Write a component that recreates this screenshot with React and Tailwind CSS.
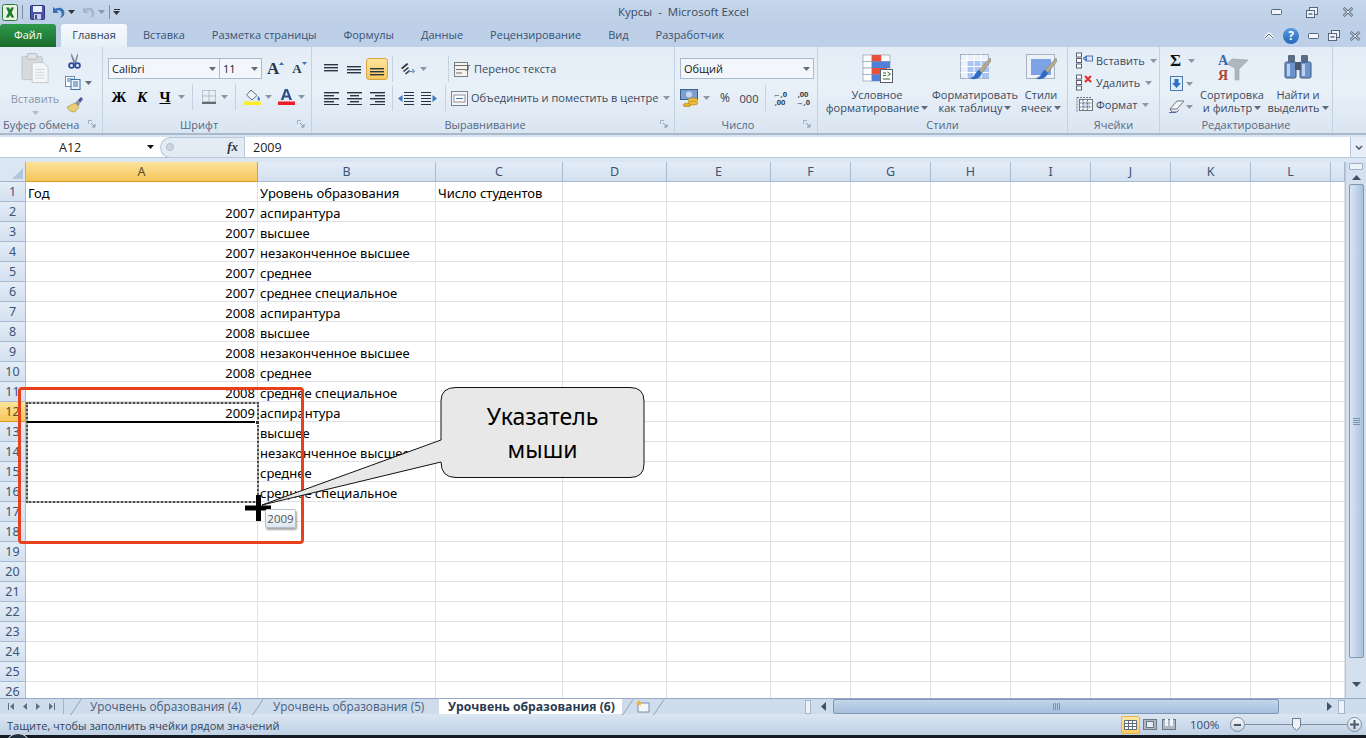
const Caret = ({ c = "#5f6b7a" }) => (
  <svg width="7" height="4" viewBox="0 0 7 4" className="shrink-0"><path d="M0 0h7L3.5 4z" fill={c} /></svg>
);

const Launcher = () => (
  <svg width="9" height="9" viewBox="0 0 9 9" className="shrink-0">
    <path d="M.5 4V.5H4M.5.5" fill="none" stroke="#9fb0c2" />
    <path d="M3 3l4 4M7 4v3H4" fill="none" stroke="#8094aa" />
  </svg>
);

const Sep = () => <div className="w-px h-[26px] bg-[#c5d2e2] shrink-0" />;

const Lines = ({ rows, w = 16 }) => (
  <svg width={w} height="14" viewBox={`0 0 ${w} 14`} className="shrink-0">
    {rows.map((r, i) => (
      <rect key={i} x={r[0]} y={r[1]} width={r[2]} height="1.4" fill="#2b3442" />
    ))}
  </svg>
);

const ExcelLogo = () => (
  <svg width="16" height="17" viewBox="0 0 16 17">
    <rect x=".5" y=".5" width="15" height="16" rx="2" fill="#e8f2e0" stroke="#2f7a37" />
    <path d="M4 3.5h3l1 2.2 1.2-2.2H12L9.6 8.5l2.6 5H9.3L8 10.9l-1.3 2.6H3.8l2.6-5z" fill="#1f7a2e" />
  </svg>
);

const Save = () => (
  <svg width="15" height="15" viewBox="0 0 15 15">
    <rect x=".5" y=".5" width="14" height="14" rx="1" fill="#4a55a8" stroke="#2c3478" />
    <rect x="3" y="1" width="9" height="6" fill="#e9eefb" />
    <rect x="4" y="9" width="7" height="5.5" fill="#c9cfe8" />
    <rect x="5" y="10" width="2" height="4" fill="#3d4690" />
  </svg>
);

const Undo = ({ c = "#3a6fb5" }) => (
  <svg width="14" height="13" viewBox="0 0 14 13">
    <path d="M2 1v6h6L5.7 4.9C8 3.5 10.5 5 10.6 8c0 1.8-.8 3-2 4 3-.5 5-2.600 4.800-5.500C13 2.500 8.500.5 4.500 2.700z" fill={c} />
  </svg>
);

const Scissors = () => (
  <svg width="13" height="16" viewBox="0 0 13 16">
    <path d="M3.500 0l3.500 8 2.500-8 .5 3-2 7-1.500 1-1-1L3 3z" fill="#7d8a99" />
    <circle cx="3.500" cy="12.500" r="2.400" fill="none" stroke="#2b4a9b" strokeWidth="1.800" />
    <circle cx="9.500" cy="12.500" r="2.400" fill="none" stroke="#2b4a9b" strokeWidth="1.800" />
  </svg>
);

const Copy = () => (
  <svg width="16" height="14" viewBox="0 0 16 14">
    <rect x=".5" y=".5" width="9" height="10" fill="#fff" stroke="#6f8db5" />
    <rect x="6" y="3.500" width="9" height="10" fill="#eef4fb" stroke="#3f6ea8" />
    <path d="M2 3h6M2 5h3M8 6h5M8 8h5M8 10h5" stroke="#3f6ea8" />
  </svg>
);

const Brush = () => (
  <svg width="17" height="16" viewBox="0 0 17 16">
    <path d="M9 6L1 10c1 3 4 5 7 5 2 0 4-4 5-6z" fill="#e8cf72" stroke="#a58a35" strokeWidth=".6" />
    <path d="M9 6l3-3 2 4-2 2z" fill="#8b92a2" />
    <path d="M12 3l3-3 2 2-3 4z" fill="#5a4aa0" />
  </svg>
);

const Paste = () => (
  <svg width="28" height="31" viewBox="0 0 28 31">
    <rect x=".5" y="3.500" width="21" height="24" rx="1.500" fill="#d5d8dc" stroke="#c2c6cb" />
    <rect x="6" y="0.500" width="10" height="6" rx="1.500" fill="#dfe2e6" stroke="#b6bbc1" />
    <path d="M11 10h12l4.500 4.500V30.500H11z" fill="#f4f5f6" stroke="#c6cacf" />
    <path d="M14 17h10M14 20h10M14 23h10M14 26h10" stroke="#d2d5d9" />
  </svg>
);

const BorderIcon = () => (
  <svg width="14" height="14" viewBox="0 0 14 14">
    <path d="M.5.500h13v11H.5zM.5 6h13M7 .500v11" fill="none" stroke="#8b96a5" strokeDasharray="1 1" />
    <path d="M0 13h14" stroke="#333" strokeWidth="1.400" />
  </svg>
);

const FillIcon = () => (
  <svg width="18" height="16" viewBox="0 0 18 16">
    <path d="M7 1l6 5.500-5 4.500-5.500-5z" fill="#eef3f9" stroke="#5d6e85" />
    <path d="M14 7c1.300 1.500 2 2.500 2 3.200a1.200 1.200 0 0 1-2.400 0c0-.7.200-1.700.4-3.200z" fill="#3a6fb5" />
    <rect y="12.500" width="17" height="3.500" fill="#ffee2a" />
  </svg>
);

const ColorA = () => (
  <svg width="17" height="16" viewBox="0 0 17 16">
    <path d="M6.800 0h3l4.200 11h-2.600l-.9-2.600H6.200L5.300 11H2.800zM7 6.500h2.900L8.400 2.300z" fill="#314f87" />
    <rect y="12.500" width="17" height="3.500" fill="#ee1c25" />
  </svg>
);

const Orient = () => (
  <svg width="18" height="15" viewBox="0 0 18 15">
    <path d="M2 6l6-5 1.300 1.300-6 5zM4 9l5-4 1 1-5 4zM6 11.500l4-3.500 1 1-4 3.500z" fill="#333" />
    <path d="M9 10l6-1M13 7l2.500 2-1.800 2.400" fill="none" stroke="#5f7ea8" />
  </svg>
);

const Indent = ({ flip }) => (
  <svg width="16" height="15" viewBox="0 0 16 15" style={flip ? { transform: "scaleX(-1)" } : undefined}>
    <path d="M6 1.500h10M6 4.500h10M6 7.500h10M6 10.500h10M6 13.500h10" stroke="#2b3442" strokeWidth="1.200" />
    <path d="M0 7.500L4.500 4v7z" fill="#3a7bc8" />
  </svg>
);

const Wrap = () => (
  <svg width="17" height="15" viewBox="0 0 17 15">
    <rect x=".5" y=".5" width="13" height="14" fill="#f7f4ee" stroke="#7b7f86" />
    <path d="M0 3.500h16M2 7.500h9M2 11h6" stroke="#6b6f76" />
    <path d="M14 4v4h-3" fill="none" stroke="#444" />
  </svg>
);

const Merge = () => (
  <svg width="17" height="15" viewBox="0 0 17 15">
    <rect x=".5" y=".5" width="16" height="14" fill="#f2f4f7" stroke="#7b828c" />
    <rect x="3" y="4" width="11" height="7" fill="#fff" stroke="#8b929c" />
    <path d="M5 7.500h7" stroke="#3a6fb5" />
  </svg>
);

const Money = () => (
  <svg width="20" height="18" viewBox="0 0 20 18">
    <rect x=".5" y=".5" width="17" height="10" fill="#7d9fd0" stroke="#3b5d92" />
    <ellipse cx="9" cy="5.500" rx="3" ry="3" fill="#c6d8f0" />
    <ellipse cx="13" cy="11" rx="5" ry="2" fill="#f0c03c" stroke="#a97e16" strokeWidth=".6" />
    <ellipse cx="13" cy="14" rx="5" ry="2" fill="#f0c03c" stroke="#a97e16" strokeWidth=".6" />
    <ellipse cx="7" cy="16" rx="4" ry="1.800" fill="#e6b22e" stroke="#a97e16" strokeWidth=".6" />
  </svg>
);

const CondFormat = () => (
  <svg width="31" height="29" viewBox="0 0 31 29">
    <g fill="#fff" stroke="#9aa9bb" strokeWidth=".8">
      {[0, 1, 2, 3].map((r) =>
        [0, 1, 2].map((c) => <rect key={`${r}${c}`} x={1 + c * 9} y={1 + r * 6.500} width="9" height="6.500" />)
      )}
    </g>
    <rect x="10" y="1" width="9" height="6.500" fill="#e8503a" />
    <rect x="10" y="7.500" width="18" height="6.500" fill="#4f81d8" />
    <rect x="10" y="14" width="15" height="6.500" fill="#e8503a" />
    <rect x="10" y="20.500" width="9" height="6.500" fill="#4f81d8" />
    <rect x="18.500" y="15.500" width="12" height="13" fill="#fff" stroke="#57606c" />
    <path d="M21 19h3M21 21.500h3M21 25h7M25.500 18l3 2-3 2" fill="none" stroke="#2f6d33" />
  </svg>
);

const BrushOver = ({ variant }) => (
  <svg width="31" height="29" viewBox="0 0 31 29">
    {variant === "table" ? (
      <g>
        <rect x=".5" y=".5" width="28" height="24" fill="#eaf1fb" stroke="#a4b2c4" />
        <rect x="7" y="7" width="22" height="17" fill="#a9c4f1" />
        <path d="M.5 6.500h28M.5 12.500h28M.5 18.500h28M7 .500v24M14 .500v24M21 .500v24" stroke="#fff" />
      </g>
    ) : (
      <g>
        <rect x=".5" y=".5" width="28" height="24" fill="#eef2f7" stroke="#a4b2c4" />
        <rect x="5" y="5" width="20" height="16" fill="#7ea2e6" />
      </g>
    )}
    <path d="M30 4L19 16l3 3L31 7z" fill="#b5a98e" stroke="#7d7667" strokeWidth=".5" />
    <path d="M19 16c-3 1-3 4-5 6-1.500 1.500-3 2-5 2 4 2 10 2 13-5z" fill="#2c6cc4" />
  </svg>
);

const InsCell = ({ mark }) => (
  <svg width="17" height="17" viewBox="0 0 17 17">
    <rect x=".5" y="1" width="5" height="4" fill="#fff" stroke="#58616d" />
    <rect x=".5" y="6.500" width="5" height="4" fill="#fff" stroke="#58616d" />
    <rect x=".5" y="12" width="5" height="4" fill="#fff" stroke="#58616d" />
    {mark === "ins" ? (
      <g>
        <path d="M7 6h3V4l-3 2.500L10 9V7" fill="#3a6fb5" stroke="#3a6fb5" strokeWidth=".5" />
        <rect x="10.500" y="4" width="6" height="5" fill="#dbe7f6" stroke="#4c78b0" />
      </g>
    ) : (
      <path d="M9 2l6 6M15 2L9 8" stroke="#e0342c" strokeWidth="2.200" />
    )}
  </svg>
);

const FormatCell = () => (
  <svg width="17" height="17" viewBox="0 0 17 17">
    <rect x="3.500" y="3.500" width="13" height="11" fill="#fbfbf6" stroke="#6d7682" />
    <rect x="6" y="5.500" width="8" height="7" fill="#ccdcf3" />
    <path d="M1 1.500h14M1 1.500v15M7 3.500v11M11.500 3.500v11M3.500 7h13M3.500 11h13" stroke="#6d7682" strokeDasharray="2 1" fill="none" />
  </svg>
);

const FillDown = () => (
  <svg width="13" height="15" viewBox="0 0 13 15">
    <rect x=".5" y=".5" width="12" height="14" fill="#e1ecf9" stroke="#4c78b0" />
    <path d="M4.500 3h4v4H11l-4.500 5L2 7h2.500z" fill="#2f6ec2" />
  </svg>
);

const Eraser = () => (
  <svg width="16" height="13" viewBox="0 0 16 13">
    <path d="M1 9l7-8h7l-7 8z" fill="#f6f7f9" stroke="#6f7782" />
    <path d="M1 9l2 3h5l2-2" fill="none" stroke="#6f7782" />
    <path d="M0 12.500h7" stroke="#4c6f9e" />
  </svg>
);

const SortFilter = () => (
  <svg width="31" height="29" viewBox="0 0 31 29">
    <path d="M10 11l5-5 16 1-9 9v11h-4V15z" fill="#b1b7be" stroke="#8e959d" strokeWidth=".5" />
    <text x="1" y="12" fontSize="14" fontWeight="700" fontFamily="Liberation Serif" fill="#3869ad">A</text>
    <text x="1" y="27" fontSize="14" fontWeight="700" fontFamily="Liberation Serif" fill="#b0412f">Я</text>
  </svg>
);

const Binoculars = () => (
  <svg width="28" height="26" viewBox="0 0 28 26">
    <rect x="4" y="2" width="7" height="7" rx="1" fill="#5a6c86" />
    <rect x="17" y="2" width="7" height="7" rx="1" fill="#5a6c86" />
    <rect x="1" y="9" width="11" height="16" rx="1.500" fill="#6c93cc" stroke="#3e5778" />
    <rect x="16" y="9" width="11" height="16" rx="1.500" fill="#6c93cc" stroke="#3e5778" />
    <rect x="11" y="9" width="6" height="8" fill="#46586f" />
    <rect x="3" y="11" width="3" height="12" fill="#bcd0ec" />
    <rect x="18" y="11" width="3" height="12" fill="#bcd0ec" />
  </svg>
);

const WinMin = ({ w = 11 }) => (
  <svg width={w} height="6" viewBox={`0 0 ${w} 6`}><rect x=".5" y=".5" width={w - 1} height="5" rx="1" fill="#f2f6fb" stroke="#55667c" /></svg>
);
const WinRestore = () => (
  <svg width="12" height="11" viewBox="0 0 12 11">
    <rect x="3.500" y=".5" width="8" height="7" fill="#eef3f9" stroke="#55667c" />
    <rect x=".5" y="3.500" width="8" height="7" fill="#eef3f9" stroke="#55667c" />
    <rect x="2.500" y="6" width="4" height="2" fill="#7f8ea0" />
  </svg>
);
const WinClose = () => (
  <svg width="12" height="10" viewBox="0 0 12 10">
    <path d="M1.500 1l9 8M10.500 1l-9 8" stroke="#55667c" strokeWidth="2.600" />
    <path d="M1.500 1l9 8M10.500 1l-9 8" stroke="#eef3f9" strokeWidth="1" />
  </svg>
);

const Group = ({ label, className, children, launcher, labelClass = "justify-center" }) => (
  <div className={`h-full flex flex-col border-r border-[#c4d1e1] shrink-0 ${className}`}>
    <div className="flex-1 min-h-0 flex">{children}</div>
    <div className={`h-[18px] flex items-center text-[11px] text-[#56677f] relative ${labelClass}`}>
      <span>{label}</span>
      {launcher && <span className="absolute right-[5px] top-[5px] flex"><Launcher /></span>}
    </div>
  </div>
);

const colHeaders = [
  ["A", "w-[232px]"], ["B", "w-[178px]"], ["C", "w-[127px]"], ["D", "w-[104px]"], ["E", "w-[104px]"], ["F", "w-[80px]"],
  ["G", "w-[80px]"], ["H", "w-[80px]"], ["I", "w-[80px]"], ["J", "w-[80px]"], ["K", "w-[80px]"], ["L", "w-[80px]"], ["", "w-[14px]"],
];

const data = {
  1: ["Год", "Уровень образования", "Число студентов"],
  2: ["2007", "аспирантура"], 3: ["2007", "высшее"], 4: ["2007", "незаконченное высшее"], 5: ["2007", "среднее"],
  6: ["2007", "среднее специальное"], 7: ["2008", "аспирантура"], 8: ["2008", "высшее"], 9: ["2008", "незаконченное высшее"],
  10: ["2008", "среднее"], 11: ["2008", "среднее специальное"], 12: ["2009", "аспирантура"], 13: ["", "высшее"],
  14: ["", "незаконченное высшее"], 15: ["", "среднее"], 16: ["", "среднее специальное"],
};

const rows = Array.from({ length: 26 }, (_, i) => i + 1);

function Grid() {
  return (
    <div className="flex-1 min-w-0 h-full overflow-hidden font-['Noto_Sans',sans-serif]">
      <div className="flex h-5">
        <div className="w-[26px] shrink-0 bg-[#dbe6f3] border-r border-b border-[#9fb3cb] flex items-end justify-end p-[2px]">
          <svg width="11" height="11" viewBox="0 0 11 11"><path d="M11 0v11H0z" fill="#b4c6dc" /></svg>
        </div>
        {colHeaders.map(([n, w], i) => (
          <div
            key={i}
            className={`${w} shrink-0 flex items-center justify-center pt-px text-[12.5px] border-r border-b ${
              n === "A"
                ? "bg-gradient-to-b from-[#fbe39a] to-[#f6c65a] border-[#e0a030] border-b-[#d99a28] text-[#5b4d2a]"
                : "bg-gradient-to-b from-[#e4edf7] to-[#d3e0ef] border-[#a9bbd1] text-[#3e5475]"
            }`}
          >
            {n}
          </div>
        ))}
      </div>
      {rows.map((r) => {
        const d = data[r] || [];
        const numeric = r > 1;
        return (
          <div key={r} className="flex h-5">
            <div
              className={`w-[26px] shrink-0 flex items-center justify-center pt-[2px] text-[12.5px] border-r border-b ${
                r === 12
                  ? "bg-gradient-to-b from-[#fbe39a] to-[#f6c65a] border-[#d99a28] text-[#5b4d2a]"
                  : "bg-gradient-to-b from-[#e4edf7] to-[#d3e0ef] border-[#a9bbd1] text-[#3e5475]"
              }`}
            >
              {r}
            </div>
            {colHeaders.map(([n, w], i) => (
              <div
                key={i}
                className={`${w} shrink-0 h-5 border-r border-b border-[#dfe1e4] bg-white text-[13px] leading-[22px] text-black whitespace-nowrap overflow-visible px-[2px] ${
                  i === 0 && numeric ? "text-right" : "text-left"
                }`}
              >
                {d[i] || ""}
              </div>
            ))}
          </div>
        );
      })}
    </div>
  );
}

function VScroll() {
  return (
    <div className="w-[21px] shrink-0 h-full bg-[#d5e0ee] border-l border-[#b6c6da] flex flex-col items-center">
      <div className="w-[14px] h-[7px] mt-px bg-[#eef3f9] border border-[#9fb2c9] rounded-[1px]" />
      <div className="h-[14px] flex items-center justify-center">
        <svg width="9" height="5" viewBox="0 0 9 5"><path d="M0 5h9L4.500 0z" fill="#3f5068" /></svg>
      </div>
      <div className="w-[15px] h-[474px] rounded-[2px] border border-[#7e97b6] bg-gradient-to-r from-[#dbe6f3] to-[#a9c1de] flex items-center justify-center">
        <div className="w-[7px] h-[7px] bg-[repeating-linear-gradient(to_bottom,#7b90ab_0,#7b90ab_1px,transparent_1px,transparent_2px)]" />
      </div>
      <div className="flex-1" />
      <div className="h-[18px] flex items-center justify-center mb-[5px]">
        <svg width="9" height="5" viewBox="0 0 9 5"><path d="M0 0h9L4.500 5z" fill="#3f5068" /></svg>
      </div>
    </div>
  );
}

const Slant = () => (
  <svg width="12" height="16" viewBox="0 0 12 16" className="shrink-0">
    <path d="M0 15.500h1L11 .5" fill="none" stroke="#8ea2bb" />
  </svg>
);

function SheetBar() {
  return (
    <div className="h-4 flex bg-[#cfdcec] border-t border-[#93a9c4] text-[#48607f]">
      <div className="w-[63px] shrink-0 flex items-center justify-around px-[4px] text-[#5a6e88]">
        <svg width="6" height="7" viewBox="0 0 6 7"><path d="M0 0h1v7H0zM6 0v7L2 3.500z" fill="currentColor" /></svg>
        <svg width="4" height="7" viewBox="0 0 4 7"><path d="M4 0v7L0 3.500z" fill="currentColor" /></svg>
        <svg width="4" height="7" viewBox="0 0 4 7"><path d="M0 0v7l4-3.500z" fill="currentColor" /></svg>
        <svg width="6" height="7" viewBox="0 0 6 7"><path d="M5 0h1v7H5zM0 0v7l4-3.500z" fill="currentColor" /></svg>
      </div>
      <div className="w-px bg-[#a3b5cb]" />
      <div className="flex items-center text-[11.75px] leading-none ml-[6px]">
        <Slant />
        <span className="ml-[8px] pt-px w-[162px] whitespace-nowrap">Урочвень образования (4)</span>
        <Slant />
        <span className="ml-[9px] pt-px w-[162px] whitespace-nowrap">Урочвень образования (5)</span>
        <div className="ml-[4px] h-[15px] flex items-center bg-white pl-[9px] pt-px w-[183px] shrink-0 font-bold text-[12.2px] text-[#2a3a50] whitespace-nowrap">Урочвень образования (6)</div>
        <Slant />
        <span className="flex ml-px">
          <svg width="16" height="13" viewBox="0 0 16 13">
            <path d="M3 3h11v9H3z" fill="#f3f7fc" stroke="#7a8da5" />
            <path d="M4 0l1 2 2 .5-1.500 1.500.5 2L4 5 2 6l.4-2L1 2.500 3 2z" fill="#f2b632" />
          </svg>
        </span>
        <span className="ml-[2px] flex"><Slant /></span>
      </div>
      <div className="flex-1" />
      <div className="w-[6px] h-[14px] my-auto bg-[#eef3f9] border border-[#a3b5cb] mr-[5px]" />
      <div className="w-[14px] flex items-center justify-center">
        <svg width="5" height="9" viewBox="0 0 5 9"><path d="M5 0v9L0 4.500z" fill="#3f5068" /></svg>
      </div>
      <div className="w-[446px] h-[15px] ml-[3px] rounded-[2px] border border-[#7e97b6] bg-gradient-to-b from-[#c4d6ea] to-[#a6bfdc] flex items-center justify-center">
        <div className="w-[7px] h-[7px] bg-[repeating-linear-gradient(to_right,#7b90ab_0,#7b90ab_1px,transparent_1px,transparent_2px)]" />
      </div>
      <div className="w-[53px] flex items-center justify-end">
        <svg width="5" height="9" viewBox="0 0 5 9"><path d="M0 0v9l5-4.500z" fill="#3f5068" /></svg>
      </div>
      <div className="w-[7px] h-[14px] my-auto ml-[6px] bg-[#eef3f9] border border-[#a3b5cb]" />
      <div className="w-[21px]" />
    </div>
  );
}

function StatusBar() {
  return (
    <div className="h-[21px] flex items-center bg-gradient-to-b from-[#dbe6f2] to-[#bfd0e4] text-[11px] text-[#32445c] pl-[7px]">
      <span className="whitespace-nowrap pt-[3px]">Тащите, чтобы заполнить ячейки рядом значений</span>
      <div className="flex-1" />
      <div className="w-[19px] h-[18px] rounded-[2px] border border-[#e8b648] bg-gradient-to-b from-[#fde9a8] to-[#f9cc62] flex items-center justify-center">
        <svg width="13" height="10" viewBox="0 0 13 10"><path d="M.5.5h12v9H.5zM.5 3.500h12M.5 6.500h12M4.500.5v9M8.500.5v9" fill="#fff" stroke="#5f6b7a" /></svg>
      </div>
      <div className="w-[19px] flex justify-center">
        <svg width="14" height="11" viewBox="0 0 14 11"><rect x=".5" y=".5" width="13" height="10" fill="#aeb8c4" stroke="#6b7785" /><rect x="3.500" y="2.500" width="7" height="6" fill="#e6ebf1" stroke="#6b7785" /></svg>
      </div>
      <div className="w-[19px] flex justify-center">
        <svg width="14" height="11" viewBox="0 0 14 11"><rect x=".5" y=".5" width="13" height="10" fill="#aeb8c4" stroke="#6b7785" /><rect x="3" y="0" width="3" height="7" fill="#f2f5f8" /><rect x="8" y="0" width="3" height="7" fill="#f2f5f8" /></svg>
      </div>
      <span className="ml-[12px] w-[36px] text-[11.5px] text-[#33496b]">100%</span>
      <div className="ml-[4px] w-[15px] h-[15px] rounded-full border border-[#7f8fa3] bg-gradient-to-b from-[#f6f8fb] to-[#c8d4e2] flex items-center justify-center">
        <div className="w-[7px] h-[2px] bg-[#4a5a6e]" />
      </div>
      <div className="w-[102px] h-[15px] flex items-center relative">
        <div className="w-full h-px bg-[#7f8fa3]" />
        <svg width="9" height="13" viewBox="0 0 9 13" className="absolute left-[47px] top-px"><path d="M.5.5h8v8L4.500 12.500.5 8.500z" fill="#eef2f7" stroke="#6c7c90" /></svg>
      </div>
      <div className="w-[15px] h-[15px] mr-[4px] rounded-full border border-[#7f8fa3] bg-gradient-to-b from-[#f6f8fb] to-[#c8d4e2] flex items-center justify-center">
        <svg width="9" height="9" viewBox="0 0 9 9"><path d="M3.500 0h2v3.500H9v2H5.500V9h-2V5.500H0v-2h3.500z" fill="#4a5a6e" /></svg>
      </div>
    </div>
  );
}

function Ribbon() {
  return (
    <div className="h-[86px] flex bg-gradient-to-b from-[#e4edf7] via-[#e8f0f8] to-[#dae5f2] text-[#3a4a60] text-[11px] leading-none">
      <Group label="Буфер обмена" launcher className="w-[103px]" labelClass="justify-start pl-[3px]">
        <div className="w-[62px] flex flex-col items-center pt-[6px] pl-[8px] text-[#8b97a6]">
          <Paste />
          <span className="mt-[10px]">Вставить</span>
          <span className="mt-[7px]"><Caret c="#b1bac6" /></span>
        </div>
        <div className="w-[24px] flex flex-col items-center pt-[6px] gap-[7px]">
          <Scissors />
          <div className="flex items-center gap-[4px] -mr-[8px]"><Copy /><Caret /></div>
          <Brush />
        </div>
      </Group>
      <Group label="Шрифт" launcher className="w-[209px]" labelClass="justify-center pr-[16px]">
        <div className="flex flex-col pl-[5px] pt-[11px]">
          <div className="flex items-center h-[21px]">
            <div className="w-[112px] h-[21px] flex items-center justify-between border border-[#abbacc] bg-[#f3f7fb] px-[3px] text-[#222]">
              <span>Calibri</span><Caret />
            </div>
            <div className="w-[43px] h-[21px] -ml-px flex items-center justify-between border border-[#abbacc] bg-[#f3f7fb] px-[3px] text-[#222]">
              <span>11</span><Caret />
            </div>
            <span className="ml-[5px] font-['Liberation_Serif',serif] font-bold text-[17px] text-[#27364c]">A</span>
            <svg width="5" height="3" viewBox="0 0 5 3" className="mb-[10px]"><path d="M0 3h5L2.500 0z" fill="#3a6fb5" /></svg>
            <span className="ml-[8px] font-['Liberation_Serif',serif] font-bold text-[13px] text-[#27364c]">A</span>
            <svg width="5" height="3" viewBox="0 0 5 3" className="mb-[10px]"><path d="M0 0h5L2.500 3z" fill="#3a6fb5" /></svg>
          </div>
          <div className="flex items-center h-[22px] mt-[7px] font-['Liberation_Serif',serif] font-bold text-[15px] text-black">
            <span className="w-[22px] text-center">Ж</span>
            <span className="w-[24px] text-center italic">К</span>
            <span className="w-[22px] text-center underline">Ч</span>
            <span className="ml-[2px]"><Caret c="#8a97a6" /></span>
            <span className="ml-[7px]"><Sep /></span>
            <span className="ml-[9px] flex"><BorderIcon /></span>
            <span className="ml-[5px]"><Caret c="#8a97a6" /></span>
            <span className="ml-[7px]"><Sep /></span>
            <span className="ml-[8px] flex"><FillIcon /></span>
            <span className="ml-[3px]"><Caret c="#8a97a6" /></span>
            <span className="ml-[6px] flex"><ColorA /></span>
            <span className="ml-[3px]"><Caret c="#8a97a6" /></span>
          </div>
        </div>
      </Group>
      <Group label="Выравнивание" launcher className="w-[363px]" labelClass="justify-center pr-[16px]">
        <div className="flex flex-col pl-[8px] pt-[11px]">
          <div className="flex items-center h-[22px]">
            <span className="w-[24px] flex justify-center"><Lines rows={[[0, 2, 14], [0, 5, 14], [0, 8, 14]]} /></span>
            <span className="w-[22px] flex justify-center"><Lines rows={[[0, 4, 14], [0, 7, 14], [0, 10, 14]]} /></span>
            <span className="w-[22px] h-[22px] rounded-[3px] border border-[#d9a544] bg-gradient-to-b from-[#fde39a] to-[#f9c95c] flex items-center justify-center">
              <Lines rows={[[1, 6, 14], [1, 9, 14], [1, 12, 14]]} />
            </span>
            <span className="ml-[4px]"><Sep /></span>
            <span className="ml-[6px] flex"><Orient /></span>
            <span className="ml-[3px]"><Caret c="#8a97a6" /></span>
            <span className="ml-[21px]"><Sep /></span>
            <span className="ml-[5px] flex"><Wrap /></span>
            <span className="ml-[3px] -mt-px whitespace-nowrap">Перенос текста</span>
          </div>
          <div className="flex items-center h-[22px] mt-[7px]">
            <span className="w-[24px] flex justify-center"><Lines rows={[[0, 1, 15], [0, 4, 10], [0, 7, 15], [0, 10, 10], [0, 13, 15]]} /></span>
            <span className="w-[22px] flex justify-center"><Lines rows={[[0, 1, 15], [3, 4, 9], [0, 7, 15], [3, 10, 9], [0, 13, 15]]} /></span>
            <span className="w-[22px] flex justify-center"><Lines rows={[[1, 1, 15], [6, 4, 10], [1, 7, 15], [6, 10, 10], [1, 13, 15]]} /></span>
            <span className="ml-[4px]"><Sep /></span>
            <span className="ml-[5px] flex"><Indent /></span>
            <span className="ml-[7px] flex"><Indent flip /></span>
            <span className="ml-[8px]"><Sep /></span>
            <span className="ml-[5px] flex"><Merge /></span>
            <span className="ml-[3px] -mt-px whitespace-nowrap">Объединить и поместить в центре</span>
            <span className="ml-[5px]"><Caret c="#8a97a6" /></span>
          </div>
        </div>
      </Group>
      <Group label="Число" launcher className="w-[143px]" labelClass="justify-center pr-[16px]">
        <div className="flex flex-col pl-[5px] pt-[11px]">
          <div className="w-[134px] h-[21px] flex items-center justify-between border border-[#abbacc] bg-[#f3f7fb] px-[3px] text-[#222]">
            <span>Общий</span><Caret />
          </div>
          <div className="flex items-center h-[22px] mt-[8px] text-[#2f3c50]">
            <Money />
            <span className="ml-[3px]"><Caret c="#8a97a6" /></span>
            <span className="ml-[5px] w-[20px] text-center text-[12px]">%</span>
            <span className="ml-[2px] w-[24px] text-center">000</span>
            <span className="ml-[4px]"><Sep /></span>
            <span className="ml-[6px] w-[16px] text-[7.5px] leading-[8px] font-bold text-center whitespace-nowrap">←,0<br />,00</span>
            <span className="ml-[7px] w-[16px] text-[7.5px] leading-[8px] font-bold text-center whitespace-nowrap">,00<br />→,0</span>
          </div>
        </div>
      </Group>
      <Group label="Стили" className="w-[250px]">
        <div className="flex w-full pt-[7px] pl-px text-center leading-[13px]">
          <div className="w-[116px] flex flex-col items-center">
            <CondFormat />
            <span className="mt-[5px]">Условное</span>
            <span className="flex items-center gap-[2px] whitespace-nowrap">форматирование <Caret /></span>
          </div>
          <div className="w-[80px] flex flex-col items-center">
            <BrushOver variant="table" />
            <span className="mt-[5px] whitespace-nowrap">Форматировать</span>
            <span className="flex items-center gap-[2px] whitespace-nowrap">как таблицу <Caret /></span>
          </div>
          <div className="w-[52px] flex flex-col items-center">
            <BrushOver variant="cell" />
            <span className="mt-[5px]">Стили</span>
            <span className="flex items-center gap-[2px] whitespace-nowrap">ячеек <Caret /></span>
          </div>
        </div>
      </Group>
      <Group label="Ячейки" className="w-[92px]">
        <div className="flex flex-col pl-[8px] pt-[5px] gap-[5px]">
          <div className="flex items-center gap-[2px] h-[17px]"><InsCell mark="ins" /><span className="ml-[1px]">Вставить</span><span className="ml-[3px]"><Caret c="#8a97a6" /></span></div>
          <div className="flex items-center gap-[2px] h-[17px]"><InsCell mark="del" /><span className="ml-[1px]">Удалить</span><span className="ml-[3px]"><Caret c="#8a97a6" /></span></div>
          <div className="flex items-center gap-[2px] h-[17px]"><FormatCell /><span className="ml-[1px]">Формат</span><span className="ml-[3px]"><Caret c="#8a97a6" /></span></div>
        </div>
      </Group>
      <Group label="Редактирование" className="w-[173px]">
        <div className="flex w-full pl-[9px] pt-[6px] text-center leading-[13px]">
          <div className="w-[30px] flex flex-col gap-[8px] items-start">
            <div className="flex items-center gap-[7px] h-[15px] font-['Liberation_Serif',serif] font-bold text-[17px] text-[#111]"><span className="ml-[1px]">Σ</span><Caret c="#8a97a6" /></div>
            <div className="flex items-center gap-[3px] h-[15px] ml-[1px]"><FillDown /><Caret c="#8a97a6" /></div>
            <div className="flex items-center gap-[1px] h-[15px]"><Eraser /><Caret c="#8a97a6" /></div>
          </div>
          <div className="w-[66px] flex flex-col items-center">
            <SortFilter />
            <span className="mt-[6px]">Сортировка</span>
            <span className="flex items-center gap-[2px] whitespace-nowrap">и фильтр <Caret /></span>
          </div>
          <div className="w-[66px] flex flex-col items-center">
            <Binoculars />
            <span className="mt-[9px] whitespace-nowrap">Найти и</span>
            <span className="flex items-center gap-[2px] whitespace-nowrap">выделить <Caret /></span>
          </div>
        </div>
      </Group>
      <div className="flex-1" />
    </div>
  );
}

export default function App() {
  return (
    <div className="relative w-[1366px] h-[738px] overflow-hidden bg-[#c9d9ec] font-['Open_Sans','Noto_Sans',sans-serif]">
      {/* Title bar */}
      <div className="h-6 flex items-center bg-gradient-to-b from-[#c5d7ec] to-[#bccfe6] text-[11.5px] text-[#3a4a60]">
        <div className="w-[618px] flex items-center pl-[2px] shrink-0">
          <ExcelLogo />
          <div className="w-px h-[14px] bg-[#7d8ea3] ml-[4px]" />
          <span className="ml-[7px] flex"><Save /></span>
          <span className="ml-[6px] flex"><Undo /></span>
          <span className="ml-[3px]"><Caret c="#333" /></span>
          <span className="ml-[6px] flex opacity-80"><Undo c="#9fb0c4" /></span>
          <span className="ml-[3px]"><Caret c="#8a97a6" /></span>
          <div className="w-px h-[14px] bg-[#7d8ea3] ml-[4px]" />
          <span className="ml-[3px] flex flex-col gap-px items-center"><span className="w-[6px] h-px bg-[#333]" /><Caret c="#333" /></span>
        </div>
        <span className="whitespace-pre">Курсы  -  Microsoft Excel</span>
        <div className="ml-auto flex items-center pr-[12px] gap-[24px]">
          <WinMin /><WinRestore /><WinClose />
        </div>
      </div>
      {/* Tabs */}
      <div className="h-[23px] flex items-end bg-[#bdd0e7] text-[11px] text-[#3a5273]">
        <div className="w-14 h-[23px] rounded-t-[3px] bg-gradient-to-b from-[#2f9a4d] to-[#1a6c2c] text-white flex items-center justify-center">Файл</div>
        <div className="ml-[5px] w-[66px] h-[23px] rounded-t-[3px] bg-gradient-to-b from-[#f7fafd] to-[#e6eef8] text-[#2d3e55] flex items-center justify-center">Главная</div>
        <div className="flex items-center h-[23px] gap-[27px] ml-4 whitespace-nowrap">
          <span>Вставка</span><span>Разметка страницы</span><span>Формулы</span><span>Данные</span><span>Рецензирование</span><span>Вид</span><span>Разработчик</span>
        </div>
        <div className="ml-auto h-[23px] flex items-center gap-[9px] pr-[5px]">
          <svg width="10" height="7" viewBox="0 0 10 7"><path d="M1 6l4-4 4 4" fill="none" stroke="#fff" strokeWidth="3" /><path d="M1 6l4-4 4 4" fill="none" stroke="#4a5a6e" /></svg>
          <span className="w-[16px] h-[16px] rounded-full bg-gradient-to-b from-[#5a9ae0] to-[#2467b8] text-white text-[12px] font-bold flex items-center justify-center">?</span>
          <WinMin /><WinRestore /><WinClose />
        </div>
      </div>
      <Ribbon />
      <div className="h-[2px] bg-[#a9b9cc]" />
      {/* Formula bar */}
      <div className="h-[27px] flex flex-col bg-[#d7e3f1]">
        <div className="h-[2px]" />
        <div className="h-[21px] flex items-center bg-white border-b border-[#b8c7d9]">
          <div className="w-[147px] shrink-0 flex items-center pl-[59px] pt-[2px] text-[12.5px] text-[#222]">A12</div>
          <Caret c="#111" />
          <div className="ml-[6px] w-[84px] h-[21px] rounded-l-full bg-[#e3ebf5] border border-[#b8c7d9] border-r-0 flex items-center justify-between pl-[5px] pr-[6px] shrink-0">
            <span className="w-[8px] h-[8px] rounded-full bg-[#ccd6e2] border border-[#b0bdcc]" />
            <span className="font-['Liberation_Serif',serif] italic font-bold text-[13px] text-[#333]">fx</span>
          </div>
          <div className="flex-1 h-full border-l border-[#b8c7d9] pl-[8px] text-[12.5px] leading-[22px] text-[#222]">2009</div>
          <div className="w-[16px] h-full border-l border-[#b8c7d9] bg-[#e7eef7] flex items-center justify-center">
            <svg width="8" height="5" viewBox="0 0 8 5"><path d="M1 1l3 3 3-3" fill="none" stroke="#4a5a6e" strokeWidth="1.500" /></svg>
          </div>
        </div>
        <div className="flex-1 bg-[#dce6f2]" />
      </div>
      {/* Sheet */}
      <div className="h-[536px] flex">
        <Grid />
        <VScroll />
      </div>
      <SheetBar />
      <StatusBar />
      <div className="h-[3px] bg-[#141a22]" />

      {/* Overlays */}
      <div className="absolute left-[26px] top-[402px] w-[233px] h-[101px] border-2 border-[#b0b0b0]" />
      <div className="absolute left-[26px] top-[402px] w-[233px] h-[101px] border-2 border-dotted border-[#4d4d4d]" />
      <div className="absolute left-[27px] top-[421px] w-[228px] h-[2px] bg-black" />
      <div className="absolute left-[255px] top-[420px] w-[5px] h-[5px] bg-[#333] border border-white" />
      <div className="absolute left-[18px] top-[387px] w-[286px] h-[157px] rounded-[4px] border-[3px] border-[#e8401c]" />
      <svg width="1366" height="738" viewBox="0 0 1366 738" className="absolute left-0 top-0 pointer-events-none">
        <path
          d="M456 387.500H630Q644 387.500 644 401V464Q644 477.500 630 477.500H456Q441 477.500 441 462L262 505L441 440V401Q441 387.500 456 387.500Z"
          fill="#e8e8e8"
          stroke="#111"
          strokeWidth="1"
        />
        <path d="M245 505.500H271V510.500H261V521H256V510.500H245Z M256 495H261V506H256Z" fill="#000" />
      </svg>
      <div className="absolute left-[441px] top-[387px] w-[203px] h-[91px] flex flex-col items-center justify-center text-[23px] leading-[33px] text-black font-['Noto_Sans',sans-serif]">
        <span>Указатель</span>
        <span>мыши</span>
      </div>
      <div className="absolute left-[265px] top-[509px] w-[31px] h-[19px] rounded-[2px] border border-[#b5bfca] bg-gradient-to-b from-white to-[#dfe7f1] shadow-[1px_2px_2px_rgba(0,0,0,0.35)] text-[11.5px] leading-[17px] text-center text-[#555]">2009</div>
      <div className="absolute left-[5px] top-[733px] w-[26px] h-[26px] rounded-full border border-[#dfe8f2] bg-[#20303f]" />
    </div>
  );
}
